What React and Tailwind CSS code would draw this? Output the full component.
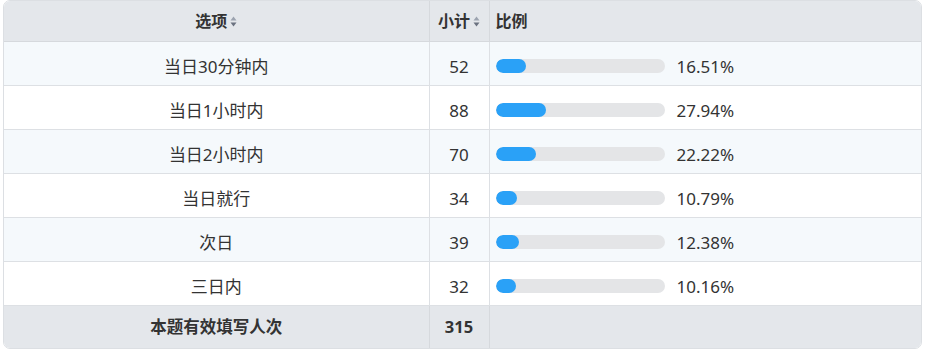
const rows = [
  { label: '当日30分钟内', count: 52, pct: 16.51 },
  { label: '当日1小时内', count: 88, pct: 27.94 },
  { label: '当日2小时内', count: 70, pct: 22.22 },
  { label: '当日就行', count: 34, pct: 10.79 },
  { label: '次日', count: 39, pct: 12.38 },
  { label: '三日内', count: 32, pct: 10.16 },
];

function SortIcon() {
  return (
    <svg width="7" height="11" viewBox="0 0 7 11" className="ml-[3px] mt-[2px]">
      <path d="M3.5 0.5 L6.5 4.5 L0.5 4.5 Z" fill="#9ca3af" />
      <path d="M3.5 10.5 L6.5 6.5 L0.5 6.5 Z" fill="#6b7280" />
    </svg>
  );
}

export default function App() {
  return (
    <div className="w-[928px] h-[353px] bg-white pl-[3px] pr-[6px] font-['Noto_Sans','Noto_Sans_CJK_SC',sans-serif] text-[#333]">
      <div className="rounded-[7px] border border-[#dcdfe3] overflow-hidden">
        <table className="w-full border-collapse table-fixed">
          <colgroup>
            <col className="w-[425px]" />
            <col className="w-[60px]" />
            <col />
          </colgroup>
          <thead>
            <tr className="h-[40px] bg-[#e4e7eb] text-[16px] font-bold">
              <th className="border-b border-[#d6d9dd]">
                <span className="inline-flex items-center">选项<SortIcon /></span>
              </th>
              <th className="border-b border-l border-[#d6d9dd]">
                <span className="inline-flex items-center">小计<SortIcon /></span>
              </th>
              <th className="border-b border-l border-[#d6d9dd] text-left pl-[6px]">比例</th>
            </tr>
          </thead>
          <tbody>
            {rows.map((r, i) => (
              <tr key={r.label} className={`h-[44px] text-[17px] ${i % 2 === 0 ? 'bg-[#f5f9fc]' : 'bg-white'}`}>
                <td className="border-b border-[#dde0e4] text-center pt-[7px]">{r.label}</td>
                <td className="border-b border-l border-[#dde0e4] text-center pt-[7px]">{r.count}</td>
                <td className="border-b border-l border-[#dde0e4] pl-[6px] pt-[5px]">
                  <div className="flex items-center">
                    <div className="w-[169px] h-[14px] rounded-full bg-[#e4e5e7] overflow-hidden">
                      <div className="h-full rounded-full bg-[#2aa1f7]" style={{ width: `calc(${r.pct}% + 3px)` }} />
                    </div>
                    <span className="ml-[12px] mt-[3px]">{r.pct.toFixed(2)}%</span>
                  </div>
                </td>
              </tr>
            ))}
            <tr className="h-[43px] bg-[#e4e7eb] text-[16.5px] font-bold">
              <td className="text-center pt-[2px]">本题有效填写人次</td>
              <td className="border-l border-[#d6d9dd] text-center pt-[2px]">315</td>
              <td className="border-l border-[#d6d9dd]"></td>
            </tr>
          </tbody>
        </table>
      </div>
    </div>
  );
}
